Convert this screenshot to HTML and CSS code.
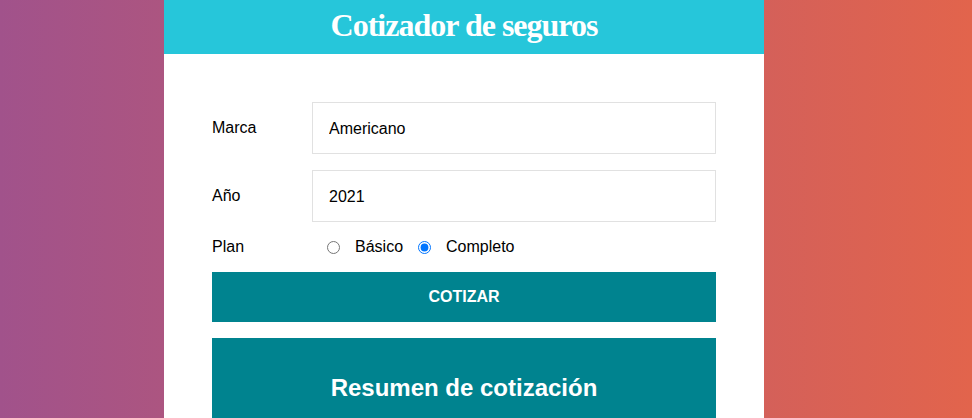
FILE: index.html
```html
<!DOCTYPE html>
<html lang="es">
<head>
<meta charset="utf-8">
<title>Cotizador de seguros</title>
<link rel="stylesheet" href="styles.css">
</head>
<body>
<div class="app">
  <header class="header">
    <h1 class="title">Cotizador de seguros</h1>
  </header>
  <div class="content">
    <form class="form">
      <div class="field">
        <label class="label">Marca</label>
        <select class="input select">
          <option>Americano</option>
          <option>Europeo</option>
          <option>Asiático</option>
        </select>
      </div>
      <div class="field">
        <label class="label">Año</label>
        <select class="input select">
          <option>2021</option>
        </select>
      </div>
      <div class="field field-plan">
        <label class="label">Plan</label>
        <input class="radio" type="radio" name="plan" value="basico"><span class="radio-text">Básico</span>
        <input class="radio" type="radio" name="plan" value="completo" checked><span class="radio-text">Completo</span>
      </div>
      <button type="button" class="button">Cotizar</button>
    </form>
    <div class="summary">
      <h2 class="summary-title">Resumen de cotización</h2>
    </div>
  </div>
</div>
</body>
</html>
```
FILE: styles.css
```css
html, body {
  margin: 0;
  padding: 0;
}
body {
  min-height: 100vh;
  background: linear-gradient(to right, #a1528b 0%, #e2644c 100%);
  font-family: "Liberation Sans", Arial, sans-serif;
  font-size: 16px;
  color: #000;
}
.app {
  width: 600px;
  margin-left: 164px;
  background: #fff;
  min-height: 100vh;
}
.header {
  background: #26c6da;
  height: 54px;
}
.title {
  margin: 0;
  text-align: center;
  color: #fff;
  font-family: "Liberation Serif", "Times New Roman", serif;
  font-weight: bold;
  font-size: 32px;
  letter-spacing: -1px;
  line-height: 50px;
}
.content {
  padding: 48px;
}
.field {
  display: flex;
  align-items: center;
  margin-bottom: 16px;
}
.label {
  flex: 0 0 100px;
}
.input {
  flex: 1;
  box-sizing: border-box;
  height: 52px;
  padding: 0 16px;
  border: 1px solid #e1e1e1;
  background: #fff;
  font-family: "Liberation Sans", Arial, sans-serif;
  font-size: 16px;
  color: #000;
  -webkit-appearance: none;
  appearance: none;
  border-radius: 0;
  outline: none;
}
.field-plan {
  height: 18px;
}
.radio {
  width: 13px;
  height: 13px;
  margin: 0 15px;
}
.radio-text {
  line-height: 18px;
}
.button {
  display: block;
  width: 100%;
  height: 50px;
  border: none;
  background: #00838f;
  color: #fff;
  font-family: "Liberation Sans", Arial, sans-serif;
  font-weight: bold;
  font-size: 16px;
  text-transform: uppercase;
  cursor: pointer;
}
.summary {
  margin-top: 16px;
  padding: 16px;
  background: #00838f;
  color: #fff;
  text-align: center;
}
.summary-title {
  font-size: 24px;
  margin: 20px 0;
  padding-bottom: 40px;
}
```
